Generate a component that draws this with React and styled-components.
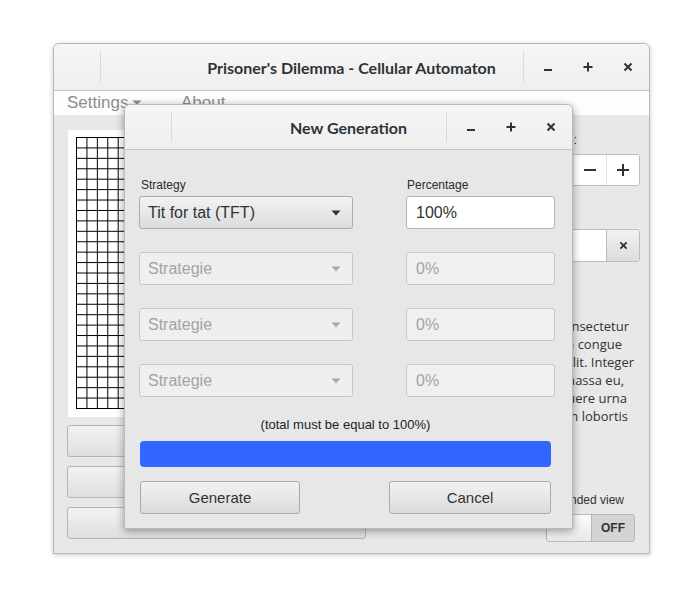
import React from "react";
import styled, { createGlobalStyle } from "styled-components";

const Global = createGlobalStyle`
  html, body { margin: 0; padding: 0; background: #ffffff; }
  * { box-sizing: border-box; }
  body { font-family: "Liberation Sans", Arial, sans-serif; }
`;

const Desktop = styled.div`
  position: relative;
  width: 700px;
  height: 600px;
  background: #ffffff;
  overflow: hidden;
`;

const Window = styled.div`
  position: absolute;
  left: ${(p) => p.$x}px;
  top: ${(p) => p.$y}px;
  width: ${(p) => p.$w}px;
  height: ${(p) => p.$h}px;
  display: flex;
  flex-direction: column;
  background: ${(p) => p.$bg};
  border: 1px solid #b9b9b9;
  border-radius: 6px 6px 0 0;
  box-shadow: ${(p) =>
    p.$dialog
      ? "0 2px 9px rgba(0,0,0,0.38)"
      : "0 1px 5px rgba(0,0,0,0.22)"};
  overflow: hidden;
`;

const TitleBar = styled.div`
  flex: 0 0 ${(p) => p.$h}px;
  display: grid;
  grid-template-columns: 46px 1px 1fr 1px 125px;
  align-items: center;
  background: linear-gradient(#f5f5f5, #efefef);
  border-bottom: 1px solid #c3c3c3;
`;

const TitleText = styled.div`
  grid-row: 1;
  grid-column: 1 / -1;
  text-align: center;
  font-family: "Lato", "Liberation Sans", sans-serif;
  font-weight: 700;
  font-size: 16px;
  color: #2e3436;
`;

const TitleSep = styled.div`
  grid-row: 1;
  grid-column: ${(p) => p.$col};
  align-self: stretch;
  margin: 7px 0;
  background: #dadada;
`;

const Controls = styled.div`
  grid-row: 1;
  grid-column: 5;
  display: flex;
  padding-left: 4px;
`;

const CtlBtn = styled.div`
  width: 40px;
  height: 20px;
  display: flex;
  align-items: center;
  justify-content: center;
`;

const MinIcon = () => (
  <svg width="10" height="10" viewBox="0 0 10 10">
    <rect x="1" y="7" width="8" height="2" fill="#2e3436" />
  </svg>
);
const MaxIcon = () => (
  <svg width="10" height="10" viewBox="0 0 10 10">
    <rect x="0.5" y="4" width="9" height="2" fill="#2e3436" />
    <rect x="4" y="0.5" width="2" height="9" fill="#2e3436" />
  </svg>
);
const CloseIcon = ({ size = 10 }) => (
  <svg width={size} height={size} viewBox="0 0 10 10">
    <path d="M1.5 1.5 L8.5 8.5 M8.5 1.5 L1.5 8.5" stroke="#2e3436" strokeWidth="2" />
  </svg>
);

const WindowControls = () => (
  <Controls>
    <CtlBtn><MinIcon /></CtlBtn>
    <CtlBtn><MaxIcon /></CtlBtn>
    <CtlBtn><CloseIcon /></CtlBtn>
  </Controls>
);

/* ---------- main window ---------- */

const MenuBar = styled.div`
  flex: 0 0 24px;
  display: flex;
  align-items: center;
  background: #fdfdfd;
  padding-left: 13px;
  font-size: 17px;
  color: #8d8d8d;
`;

const MenuItem = styled.div`
  display: flex;
  align-items: center;
  gap: 4px;
  width: ${(p) => p.$w}px;
`;

const MenuArrow = () => (
  <svg width="10" height="6" viewBox="0 0 10 6">
    <path d="M0.5 0.5 L9.5 0.5 L5 5 Z" fill="#8d8d8d" />
  </svg>
);

const Content = styled.div`
  flex: 1;
  display: flex;
  gap: 14px;
  padding: 15px 9px 11px 13px;
`;

const LeftCol = styled.div`
  width: 299px;
  display: flex;
  flex-direction: column;
  gap: 9px;
`;

const GridBox = styled.div`
  height: 287px;
  margin-left: 1px;
  background: #ffffff;
  padding: 7px 8px;
  margin-bottom: -1px;
`;

const SideButton = styled.div`
  height: 32px;
  border: 1px solid #b4b4b4;
  border-radius: 3px;
  background: linear-gradient(#f2f2f2, #dfdfdf);
`;

const RightCol = styled.div`
  flex: 1;
  display: flex;
  flex-direction: column;
`;

const FieldLabel = styled.div`
  font-size: 13px;
  line-height: 16px;
  color: #2e3436;
  white-space: nowrap;
  text-align: right;
  padding-right: ${(p) => p.$pr}px;
  margin-top: ${(p) => p.$mt || 0}px;
`;

const InputRow = styled.div`
  display: flex;
  height: ${(p) => p.$h}px;
  margin-top: ${(p) => p.$mt}px;
  border: 1px solid #bcbcbc;
  border-radius: 3px;
  background: #ffffff;
  overflow: hidden;
`;

const InputFill = styled.div`
  flex: 1;
`;

const RowButton = styled.div`
  width: 33px;
  display: flex;
  align-items: center;
  justify-content: center;
  border-left: 1px solid ${(p) => (p.$gray ? "#bcbcbc" : "#e2e2e2")};
  background: ${(p) => (p.$gray ? "linear-gradient(#f1f1f1, #dcdcdc)" : "#ffffff")};
`;

const Paragraph = styled.div`
  margin-top: 55px;
  font-family: "Open Sans", "Noto Sans", sans-serif;
  font-size: 13px;
  line-height: 18px;
  color: #2e3436;
`;

const ParaLine = styled.div`
  text-align: right;
  white-space: nowrap;
  padding-right: ${(p) => p.$pr}px;
`;

const Spacer = styled.div`
  flex: 1;
`;

const SwitchArea = styled.div`
  display: flex;
  flex-direction: column;
  align-items: flex-end;
  gap: 7px;
  padding-right: 5px;
`;

const SwitchLabel = styled.div`
  font-size: 12px;
  line-height: 14px;
  color: #2e3436;
  margin-right: 11px;
`;

const Switch = styled.div`
  width: 89px;
  height: 28px;
  display: flex;
  border: 1px solid #b8b8b8;
  border-radius: 3px;
  overflow: hidden;
  background: #d4d4d4;
`;

const SwitchKnob = styled.div`
  width: 45px;
  background: linear-gradient(#fbfbfb, #e9e9e9);
  border-right: 1px solid #b8b8b8;
`;

const SwitchText = styled.div`
  flex: 1;
  display: flex;
  align-items: center;
  justify-content: center;
  font-size: 12px;
  font-weight: 700;
  color: #2e3436;
`;

const MinusIcon = () => (
  <svg width="12" height="12" viewBox="0 0 12 12">
    <rect x="0" y="5" width="12" height="2" fill="#2e3436" />
  </svg>
);
const PlusIcon = () => (
  <svg width="12" height="12" viewBox="0 0 12 12">
    <rect x="0" y="5" width="12" height="2" fill="#2e3436" />
    <rect x="5" y="0" width="2" height="12" fill="#2e3436" />
  </svg>
);

const CellGrid = () => {
  const n = 26;
  const size = 271;
  const step = size / n;
  const lines = [];
  for (let i = 0; i <= n; i++) {
    const p = i * step + 0.5;
    lines.push(<line key={"v" + i} x1={p} y1={0} x2={p} y2={size + 1} stroke="#000" strokeWidth="1" />);
    lines.push(<line key={"h" + i} x1={0} y1={p} x2={size + 1} y2={p} stroke="#000" strokeWidth="1" />);
  }
  return (
    <svg width={size + 1} height={size + 1} viewBox={`0 0 ${size + 1} ${size + 1}`}>
      {lines}
    </svg>
  );
};

/* ---------- dialog ---------- */

const DialogBody = styled.div`
  flex: 1;
  display: flex;
  flex-direction: column;
  padding: 28px 17px 13px 14px;
`;

const FormGrid = styled.div`
  display: grid;
  grid-template-columns: 214px 149px;
  justify-content: space-between;
  align-items: end;
  row-gap: 23px;
`;

const Field = styled.div`
  display: flex;
  flex-direction: column;
  gap: 4px;
`;

const SmallLabel = styled.div`
  font-size: 12px;
  line-height: 14px;
  color: #2b2b2b;
  padding-left: ${(p) => p.$pl || 0}px;
`;

const Combo = styled.div`
  height: 33px;
  display: flex;
  align-items: center;
  justify-content: space-between;
  padding: 0 11px 0 8px;
  border: 1px solid ${(p) => (p.$disabled ? "#c8c8c8" : "#ababab")};
  border-radius: 3px;
  background: ${(p) =>
    p.$disabled ? "#efefef" : "linear-gradient(#f3f3f3, #dcdcdc)"};
  color: ${(p) => (p.$disabled ? "#a3a3a3" : "#2e3436")};
  font-size: 16px;
`;

const Entry = styled.div`
  height: 33px;
  display: flex;
  align-items: center;
  padding-left: 9px;
  border: 1px solid ${(p) => (p.$disabled ? "#c8c8c8" : "#b4b4b4")};
  border-radius: 3px;
  background: ${(p) => (p.$disabled ? "#f0f0f0" : "#ffffff")};
  color: ${(p) => (p.$disabled ? "#a3a3a3" : "#2e3436")};
  font-size: 16px;
`;

const ComboArrow = ({ disabled }) => (
  <svg width="10" height="6" viewBox="0 0 10 6">
    <path d="M0.5 0.5 L9.5 0.5 L5 5.5 Z" fill={disabled ? "#a9a9a9" : "#2e3436"} />
  </svg>
);

const Footer = styled.div`
  width: 411px;
  margin-left: 1px;
  display: flex;
  flex-direction: column;
`;

const Note = styled.div`
  margin-top: 20px;
  text-align: center;
  font-size: 13px;
  line-height: 16px;
  color: #1e1e1e;
`;

const ProgressBar = styled.div`
  margin-top: 8px;
  height: 26px;
  border-radius: 4px;
  background: #3366ff;
`;

const ButtonRow = styled.div`
  margin-top: 14px;
  display: flex;
  justify-content: space-between;
`;

const PushButton = styled.div`
  width: ${(p) => p.$w}px;
  height: 33px;
  display: flex;
  align-items: center;
  justify-content: center;
  border: 1px solid #ababab;
  border-radius: 3px;
  background: linear-gradient(#f2f2f2, #dbdbdb);
  color: #2e3436;
  font-size: 15px;
`;

const rows = [
  { strategy: "Tit for tat (TFT)", pct: "100%", disabled: false },
  { strategy: "Strategie", pct: "0%", disabled: true },
  { strategy: "Strategie", pct: "0%", disabled: true },
  { strategy: "Strategie", pct: "0%", disabled: true },
];

const paraLines = [
  { t: "consectetur", pr: 11 },
  { t: "nulla congue", pr: 18 },
  { t: "velit. Integer", pr: 6 },
  { t: "massa eu,", pr: 16 },
  { t: "posuere urna", pr: 13 },
  { t: "in lobortis", pr: 12 },
];

export default function App() {
  return (
    <>
      <Global />
      <Desktop>
        <Window $x={53} $y={43} $w={597} $h={511} $bg="#e8e8e8">
          <TitleBar $h={47}>
            <TitleSep $col={2} />
            <TitleText>Prisoner's Dilemma - Cellular Automaton</TitleText>
            <TitleSep $col={4} />
            <WindowControls />
          </TitleBar>
          <MenuBar>
            <MenuItem $w={114}>
              Settings <MenuArrow />
            </MenuItem>
            <MenuItem>About</MenuItem>
          </MenuBar>
          <Content>
            <LeftCol>
              <GridBox>
                <CellGrid />
              </GridBox>
              <SideButton />
              <SideButton />
              <SideButton />
            </LeftCol>
            <RightCol>
              <FieldLabel $mt={2} $pr={63}>Size:</FieldLabel>
              <InputRow $h={32} $mt={6}>
                <InputFill />
                <RowButton><MinusIcon /></RowButton>
                <RowButton><PlusIcon /></RowButton>
              </InputRow>
              <InputRow $h={33} $mt={43}>
                <InputFill />
                <RowButton $gray><CloseIcon size={9} /></RowButton>
              </InputRow>
              <Paragraph>
                {paraLines.map((l, i) => (
                  <ParaLine key={i} $pr={l.pr}>{l.t}</ParaLine>
                ))}
              </Paragraph>
              <Spacer />
              <SwitchArea>
                <SwitchLabel>Extended view</SwitchLabel>
                <Switch>
                  <SwitchKnob />
                  <SwitchText>OFF</SwitchText>
                </Switch>
              </SwitchArea>
            </RightCol>
          </Content>
        </Window>

        <Window $x={124} $y={104} $w={449} $h={425} $bg="#e7e7e7" $dialog>
          <TitleBar $h={45}>
            <TitleSep $col={2} />
            <TitleText>New Generation</TitleText>
            <TitleSep $col={4} />
            <WindowControls />
          </TitleBar>
          <DialogBody>
            <FormGrid>
              {rows.map((r, i) => (
                <React.Fragment key={i}>
                  <Field>
                    {i === 0 && <SmallLabel $pl={2}>Strategy</SmallLabel>}
                    <Combo $disabled={r.disabled}>
                      <span>{r.strategy}</span>
                      <ComboArrow disabled={r.disabled} />
                    </Combo>
                  </Field>
                  <Field>
                    {i === 0 && <SmallLabel $pl={1}>Percentage</SmallLabel>}
                    <Entry $disabled={r.disabled}>{r.pct}</Entry>
                  </Field>
                </React.Fragment>
              ))}
            </FormGrid>
            <Footer>
              <Note>(total must be equal to 100%)</Note>
              <ProgressBar />
              <ButtonRow>
                <PushButton $w={160}>Generate</PushButton>
                <PushButton $w={162}>Cancel</PushButton>
              </ButtonRow>
            </Footer>
          </DialogBody>
        </Window>
      </Desktop>
    </>
  );
}
